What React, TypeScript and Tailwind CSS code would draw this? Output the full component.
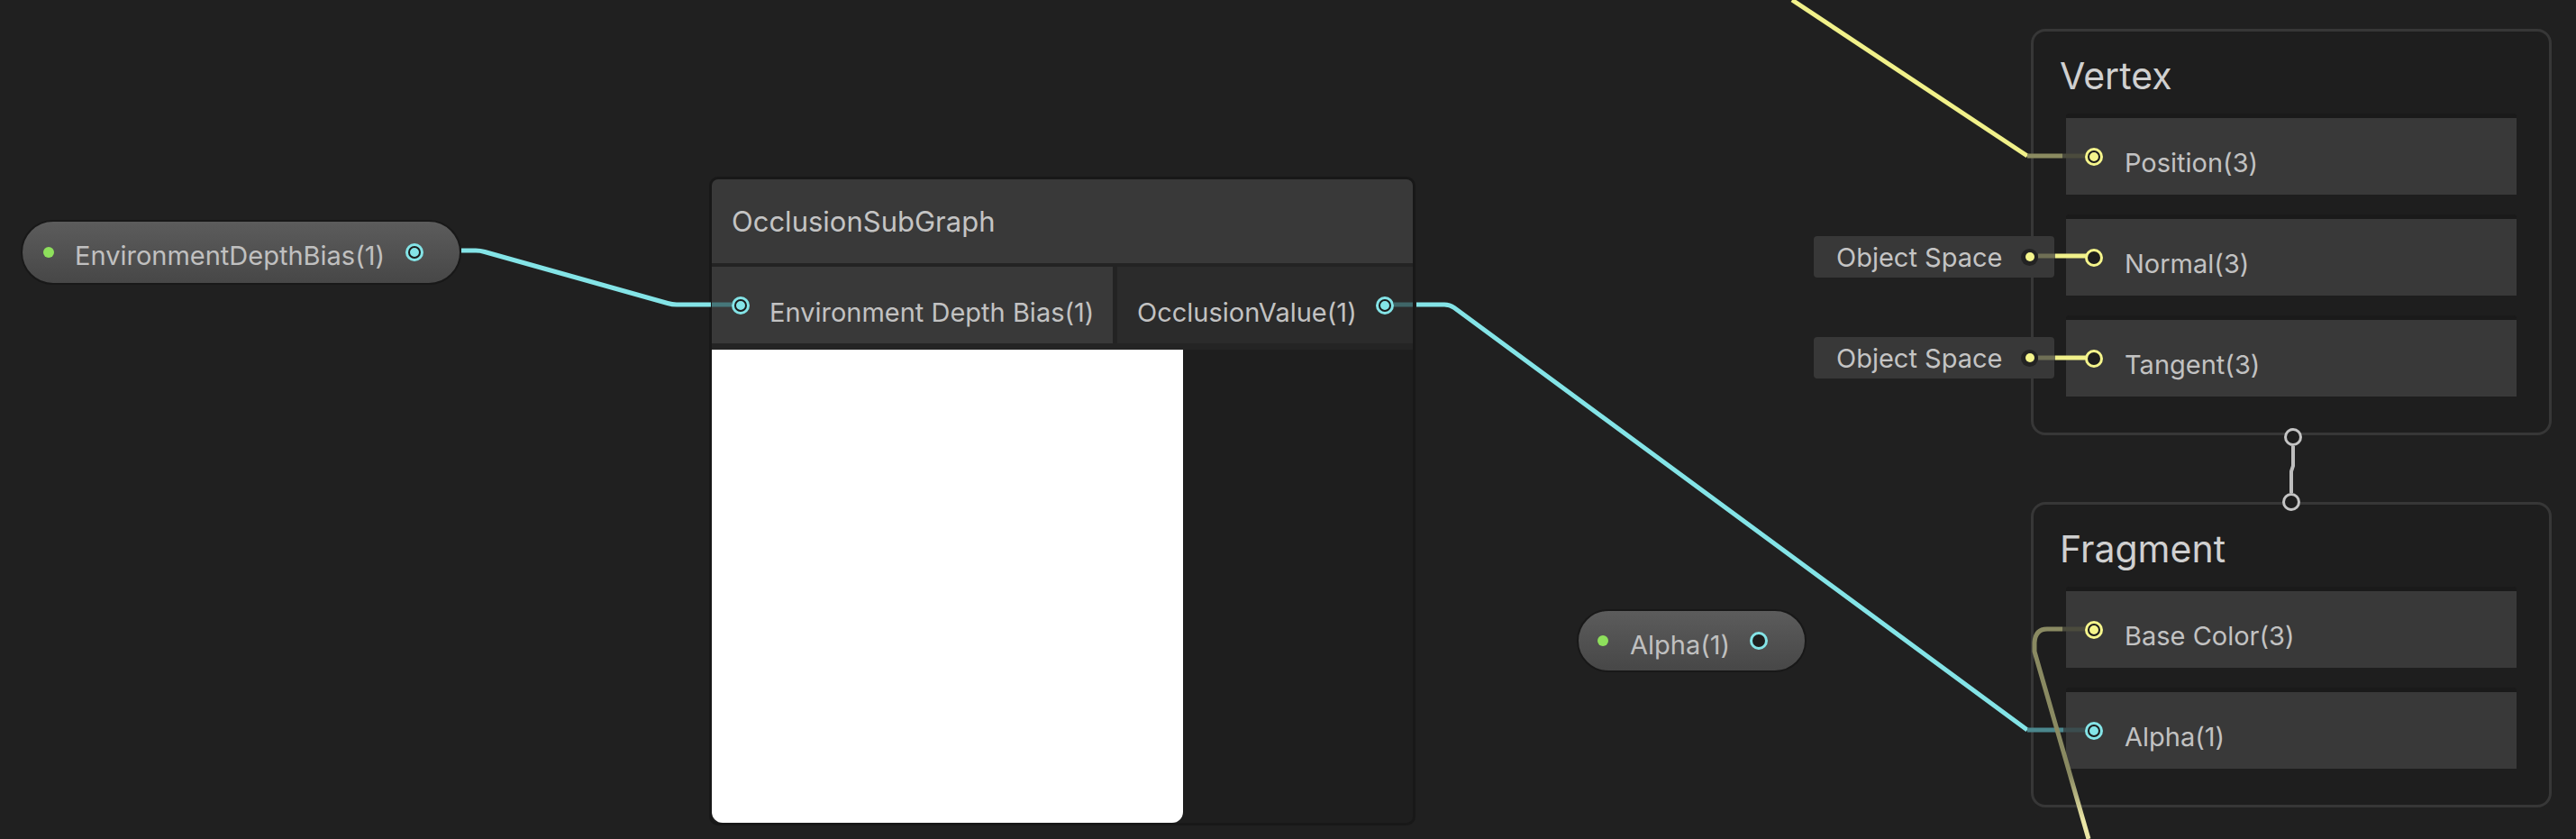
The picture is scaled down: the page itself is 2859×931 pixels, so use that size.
import React from "react";

type Tone = "cyan" | "yellow";

function PortFilled({ tone }: { tone: Tone }) {
  const outer =
    tone === "cyan"
      ? "w-[20px] h-[20px] rounded-full bg-[#84e4e7] flex items-center justify-center shrink-0"
      : "w-[20px] h-[20px] rounded-full bg-[#f5f58c] flex items-center justify-center shrink-0";
  const inner =
    tone === "cyan"
      ? "w-[14px] h-[14px] rounded-full border-2 border-[#1c1c1c] bg-[#84e4e7]"
      : "w-[14px] h-[14px] rounded-full border-2 border-[#1c1c1c] bg-[#f5f58c]";
  return (
    <div className={outer}>
      <div className={inner} />
    </div>
  );
}

function PortRing({ tone }: { tone: Tone }) {
  const cls =
    tone === "cyan"
      ? "w-[20px] h-[20px] rounded-full border-[3px] border-[#84e4e7] bg-[#1e1e1e] shrink-0"
      : "w-[20px] h-[20px] rounded-full border-[3px] border-[#f5f58c] bg-[#1e1e1e] shrink-0";
  return <div className={cls} />;
}

function BlockRow({ label, tone, filled }: { label: string; tone: Tone; filled: boolean }) {
  return (
    <div className="h-[90px] flex flex-col">
      <div className="h-[5px] bg-[#1a1a1a] rounded-t-[3px]" />
      <div className="flex-1 bg-[#393939] flex items-center pl-[21px]">
        {filled ? <PortFilled tone={tone} /> : <PortRing tone={tone} />}
        <span className="relative top-[7px] ml-[24px] text-[29px] text-[#c2c2c2] leading-none">{label}</span>
      </div>
    </div>
  );
}

function ObjectSpace({ top }: { top: string }) {
  return (
    <div className={`absolute left-[2013px] ${top} w-[267px] h-[46px] bg-[#383838] rounded-[4px] flex items-center pl-[25px]`}>
      <span className="text-[29px] text-[#c4c4c4] leading-none">Object Space</span>
      <div className="ml-auto mr-[18px] w-[19px] h-[19px] rounded-full bg-[#232323] flex items-center justify-center">
        <div className="w-[10px] h-[10px] rounded-full bg-[#f5f58c]" />
      </div>
    </div>
  );
}

export default function App() {
  return (
    <div className="relative w-[2859px] h-[931px] overflow-hidden bg-[#202020] font-['Inter','Noto_Sans',sans-serif]">
      {/* EnvironmentDepthBias property pill */}
      <div className="absolute left-[23px] top-[244px] w-[489px] h-[72px] rounded-full border-2 border-[#181818] bg-linear-to-b from-[#5c5c5c] to-[#474747] flex items-center pl-[23px] pr-[40px]">
        <div className="w-[12px] h-[12px] rounded-full bg-[#8ee05c] shrink-0" />
        <span className="relative top-[3px] ml-[23px] flex-1 text-[29px] text-[#c0c0c0] leading-none">EnvironmentDepthBias(1)</span>
        <PortFilled tone="cyan" />
      </div>

      {/* OcclusionSubGraph node */}
      <div className="absolute left-[787px] top-[196px] w-[784px] h-[720px] rounded-[10px] border-[3px] border-[#181818] bg-[#1e1e1e] flex flex-col overflow-hidden">
        <div className="h-[93px] bg-[#393939] flex items-center pl-[22px]">
          <span className="text-[31px] text-[#c4c4c4] leading-none">OcclusionSubGraph</span>
        </div>
        <div className="h-[4px] bg-[#232323]" />
        <div className="h-[85px] flex">
          <div className="w-[445px] bg-[#393939] flex items-center pl-[22px]">
            <PortFilled tone="cyan" />
            <span className="relative top-[8px] ml-[22px] text-[29px] text-[#c2c2c2] leading-none">Environment Depth Bias(1)</span>
          </div>
          <div className="w-[5px] bg-[#232323]" />
          <div className="flex-1 bg-[#2b2b2b] flex items-center pl-[22px] pr-[21px]">
            <span className="relative top-[8px] flex-1 text-[29px] text-[#c2c2c2] leading-none">OcclusionValue(1)</span>
            <PortFilled tone="cyan" />
          </div>
        </div>
        <div className="h-[7px] bg-[#242424]" />
        <div className="flex-1 flex">
          <div className="w-[523px] bg-white rounded-b-[12px]" />
          <div className="flex-1 bg-[#1e1e1e]" />
        </div>
      </div>

      {/* Alpha property pill */}
      <div className="absolute left-[1750px] top-[676px] w-[255px] h-[70px] rounded-full border-2 border-[#181818] bg-linear-to-b from-[#5c5c5c] to-[#474747] flex items-center pl-[21px] pr-[41px]">
        <div className="w-[12px] h-[12px] rounded-full bg-[#8ee05c] shrink-0" />
        <span className="relative top-[4px] ml-[24px] flex-1 text-[29px] text-[#c0c0c0] leading-none">Alpha(1)</span>
        <PortRing tone="cyan" />
      </div>

      {/* Vertex context */}
      <div className="absolute left-[2254px] top-[32px] w-[578px] h-[451px] rounded-[16px] border-[3px] border-[#373737] bg-[#1e1e1e] flex flex-col">
        <div className="h-[91px] flex items-center pl-[29px] pt-[8px]">
          <span className="text-[41px] text-[#d0d0d0] leading-none">Vertex</span>
        </div>
        <div className="flex flex-col gap-[22px] px-[36px]">
          <BlockRow label="Position(3)" tone="yellow" filled />
          <BlockRow label="Normal(3)" tone="yellow" filled={false} />
          <BlockRow label="Tangent(3)" tone="yellow" filled={false} />
        </div>
      </div>

      {/* Fragment context */}
      <div className="absolute left-[2254px] top-[557px] w-[578px] h-[339px] rounded-[16px] border-[3px] border-[#373737] bg-[#1e1e1e] flex flex-col">
        <div className="h-[91px] flex items-center pl-[29px] pt-[8px]">
          <span className="text-[41px] text-[#d0d0d0] leading-none">Fragment</span>
        </div>
        <div className="flex flex-col gap-[22px] px-[36px]">
          <BlockRow label="Base Color(3)" tone="yellow" filled />
          <BlockRow label="Alpha(1)" tone="cyan" filled />
        </div>
      </div>

      <ObjectSpace top="top-[262px]" />
      <ObjectSpace top="top-[374px]" />

      {/* Edges */}
      <svg className="absolute inset-0 pointer-events-none" width="2859" height="931" viewBox="0 0 2859 931">
        <defs>
          <linearGradient id="olive" gradientUnits="userSpaceOnUse" x1="0" y1="860" x2="0" y2="910">
            <stop offset="0" stopColor="#8a8a62" />
            <stop offset="1" stopColor="#ebe6a6" />
          </linearGradient>
        </defs>
        {/* EnvironmentDepthBias -> subgraph */}
        <path d="M 512 278 L 528 278 Q 533 278 538 279.5 L 741 336.5 Q 746 338 751 338 L 789 338" fill="none" stroke="#84e4e7" strokeWidth="5" />
        <path d="M 790 338 L 812 338" fill="none" stroke="#46777a" strokeWidth="5" />
        {/* OcclusionValue -> Alpha */}
        <path d="M 1547 338 L 1568 338" fill="none" stroke="#3f6668" strokeWidth="5" />
        <path d="M 1572 338 L 1603 338 Q 1609 338 1614 341.5 L 2250 810" fill="none" stroke="#84e4e7" strokeWidth="5" />
        <path d="M 2250 810 L 2290 810" fill="none" stroke="#4b878d" strokeWidth="5" />
        <path d="M 2290 810 L 2314 810" fill="none" stroke="#3b4d4f" strokeWidth="5" />
        {/* Position */}
        <path d="M 1989 0 L 2250 173" fill="none" stroke="#f1f18a" strokeWidth="5" />
        <path d="M 2250 173 L 2289 173" fill="none" stroke="#8b8b61" strokeWidth="5" />
        <path d="M 2289 173 L 2314 173" fill="none" stroke="#4b4b3d" strokeWidth="5" />
        {/* Normal / Tangent */}
        <path d="M 2262 284 L 2281 284" fill="none" stroke="#6f6f55" strokeWidth="5" />
        <path d="M 2281 284 L 2316 284" fill="none" stroke="#f1f18a" strokeWidth="5" />
        <path d="M 2262 397 L 2281 397" fill="none" stroke="#6f6f55" strokeWidth="5" />
        <path d="M 2281 397 L 2316 397" fill="none" stroke="#f1f18a" strokeWidth="5" />
        {/* Base Color */}
        <path d="M 2314 698 L 2289 698" fill="none" stroke="#4b4b3d" strokeWidth="5" />
        <path d="M 2289 698 L 2272 698 Q 2259 698 2258 713 L 2258 723 L 2318 931" fill="none" stroke="url(#olive)" strokeWidth="5" />
        {/* Vertex -> Fragment flow */}
        <path d="M 2545 495 L 2545 517 L 2543 523 L 2543 547" fill="none" stroke="#bdbdbd" strokeWidth="4" />
      </svg>

      <div className="absolute left-[2535px] top-[475px] w-[20px] h-[20px] rounded-full border-[3px] border-[#c4c4c4] bg-[#1e1e1e]" />
      <div className="absolute left-[2533px] top-[547px] w-[20px] h-[20px] rounded-full border-[3px] border-[#c4c4c4] bg-[#1e1e1e]" />
    </div>
  );
}
